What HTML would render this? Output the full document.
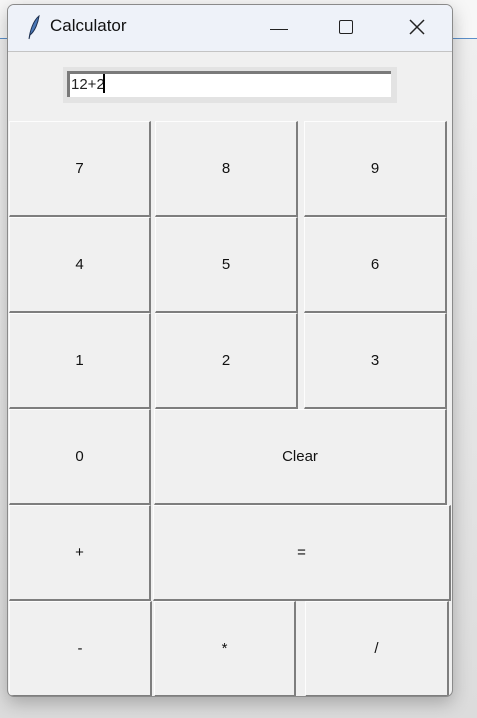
<!DOCTYPE html>
<html><head><meta charset="utf-8"><style>
html,body{margin:0;padding:0;}
body{width:477px;height:718px;position:relative;overflow:hidden;background:#e6e6e6;font-family:"Segoe UI","Liberation Sans","DejaVu Sans",sans-serif;}
.bgtop{position:absolute;left:0;top:0;width:477px;height:38px;background:#f7f7f7;border-bottom:1px solid #5b8fc9;}
.bgside{position:absolute;left:0;top:39px;width:477px;height:679px;background:linear-gradient(#efefef,#dcdcdc);}
.win{position:absolute;left:7px;top:4px;width:444px;height:691px;background:#f0f0f0;border:1px solid #8a8a8a;border-radius:7px;box-shadow:0 6px 18px rgba(0,0,0,.25);overflow:hidden;}
.title{position:absolute;left:0;top:0;width:444px;height:46px;background:#eef2f9;border-bottom:1px solid #c4c4c4;}
.title .t{position:absolute;left:42px;top:11px;font-size:17px;color:#111;}
.entry{position:absolute;left:55px;top:62px;width:334px;height:36px;background:#e3e3e3;}
.entry .in{position:absolute;left:4px;top:4px;width:324px;height:26px;background:#fff;border-top:3px solid #7a7a7a;border-left:3px solid #7a7a7a;box-sizing:border-box;font-size:15px;line-height:22px;padding-left:1px;color:#222;}
.cur{display:inline-block;width:2px;height:19px;background:#000;vertical-align:-4px;margin-left:-2px;}
.b{position:absolute;background:#f0f0f0;box-sizing:border-box;border-top:1px solid #fdfdfd;border-left:1px solid #fdfdfd;border-right:2px solid #7e7e7e;border-bottom:2px solid #7e7e7e;display:flex;align-items:center;justify-content:center;font-size:15px;color:#111;}
</style></head><body>
<div class="bgtop"></div><div class="bgside"></div>
<div class="win">
 <div class="title">
  <svg style="position:absolute;left:17px;top:10px" width="16" height="26" viewBox="0 0 16 26"><path d="M4 24 C5 16 8 6 14 1 C13 8 10 16 5 20 Z" fill="#4a78b8" stroke="#1d3050" stroke-width="1"/></svg>
  <div class="t">Calculator</div>
  <div style="position:absolute;left:262px;top:24px;width:18px;height:1px;background:#222"></div>
  <div style="position:absolute;left:331px;top:15px;width:12px;height:12px;border:1.5px solid #222;border-radius:2px"></div>
  <svg style="position:absolute;left:401px;top:14px" width="16" height="16" viewBox="0 0 16 16"><path d="M1 1L15 15M15 1L1 15" stroke="#222" stroke-width="1.5"/></svg>
 </div>
 <div class="entry"><div class="in">12+2<span class="cur"></span></div></div>

 <div class="b" style="left:1px;top:116px;width:142px;height:96px">7</div>
 <div class="b" style="left:147px;top:116px;width:143px;height:96px">8</div>
 <div class="b" style="left:296px;top:116px;width:143px;height:96px">9</div>

 <div class="b" style="left:1px;top:212px;width:142px;height:96px">4</div>
 <div class="b" style="left:147px;top:212px;width:143px;height:96px">5</div>
 <div class="b" style="left:296px;top:212px;width:143px;height:96px">6</div>

 <div class="b" style="left:1px;top:308px;width:142px;height:96px">1</div>
 <div class="b" style="left:147px;top:308px;width:143px;height:96px">2</div>
 <div class="b" style="left:296px;top:308px;width:143px;height:96px">3</div>

 <div class="b" style="left:1px;top:404px;width:142px;height:96px">0</div>
 <div class="b" style="left:146px;top:404px;width:293px;height:96px">Clear</div>

 <div class="b" style="left:1px;top:500px;width:142px;height:96px">+</div>
 <div class="b" style="left:145px;top:500px;width:298px;height:96px">=</div>

 <div class="b" style="left:1px;top:596px;width:143px;height:96px">-</div>
 <div class="b" style="left:146px;top:596px;width:142px;height:96px">*</div>
 <div class="b" style="left:297px;top:596px;width:144px;height:96px">/</div>
</div>
</body></html>
